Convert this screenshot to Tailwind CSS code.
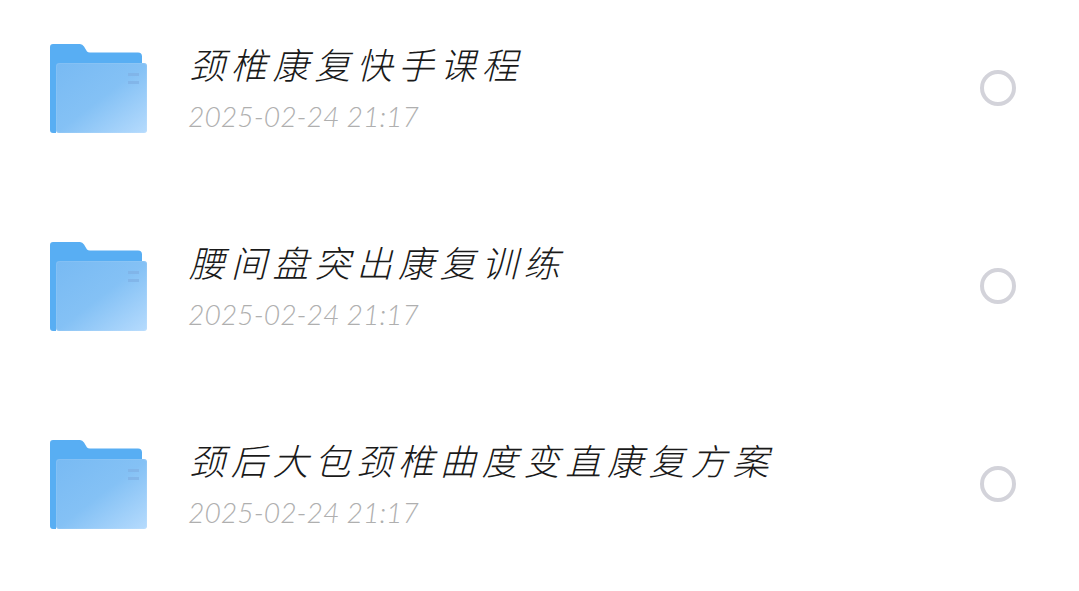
<!DOCTYPE html>
<html lang="zh">
<head>
    <meta charset="UTF-8">
    <title>文件夹</title>
    <script src="https://cdn.jsdelivr.net/npm/@tailwindcss/browser@4"></script>
</head>
<body class="bg-white overflow-hidden">
    <svg width="0" height="0" class="absolute">
        <defs>
            <linearGradient id="front" x1="0" y1="0" x2="1" y2="1">
                <stop offset="0" stop-color="#78baf3"/>
                <stop offset="0.5" stop-color="#84c1f5"/>
                <stop offset="1" stop-color="#b6dbfd"/>
            </linearGradient>
            <symbol id="folder" viewBox="0 0 97 90">
                <path d="M3 0H30Q32.500 0 34 2.500L37 7.500Q38 8.500 40 8.500H88Q92 8.500 92 12.500V30H6V89H3Q0 89 0 86V3Q0 0 3 0Z" fill="#58aef3"/>
                <rect x="6" y="19" width="91" height="70" rx="3" fill="url(#front)"/>
                <rect x="6.500" y="19.500" width="90" height="69" rx="3" fill="none" stroke="#ffffff" stroke-opacity="0.08"/>
                <rect x="78" y="29" width="11" height="3" fill="#7fb2e6" fill-opacity="0.8"/>
                <rect x="78" y="37" width="11" height="3" fill="#7fb2e6" fill-opacity="0.8"/>
            </symbol>
        </defs>
    </svg>

    <div class="flex flex-col gap-[108px] pt-[44px] pl-[50px] pr-[63px]">
        <div class="flex items-center h-[90px]">
            <svg class="w-[97px] h-[90px] shrink-0"><use href="#folder"/></svg>
            <div class="ml-[42px] flex-1 mb-[2px]">
                <div class="font-['Noto_Sans_CJK_SC',sans-serif] text-[36px] leading-[42px] tracking-[5.800px] text-[#1a1a1a] font-light italic">颈椎康复快手课程</div>
                <div class="font-['Lato',sans-serif] text-[28.300px] leading-[36px] mt-[14px] -ml-[1px] text-[#afafaf] font-light italic">2025-02-24 21:17</div>
            </div>
            <div class="w-9 h-9 rounded-full border-[4px] border-[#d3d3da] shrink-0 mb-[2px]"></div>
        </div>
        <div class="flex items-center h-[90px]">
            <svg class="w-[97px] h-[90px] shrink-0"><use href="#folder"/></svg>
            <div class="ml-[42px] flex-1 mb-[2px]">
                <div class="font-['Noto_Sans_CJK_SC',sans-serif] text-[36px] leading-[42px] tracking-[5.800px] text-[#1a1a1a] font-light italic">腰间盘突出康复训练</div>
                <div class="font-['Lato',sans-serif] text-[28.300px] leading-[36px] mt-[14px] -ml-[1px] text-[#afafaf] font-light italic">2025-02-24 21:17</div>
            </div>
            <div class="w-9 h-9 rounded-full border-[4px] border-[#d3d3da] shrink-0 mb-[2px]"></div>
        </div>
        <div class="flex items-center h-[90px]">
            <svg class="w-[97px] h-[90px] shrink-0"><use href="#folder"/></svg>
            <div class="ml-[42px] flex-1 mb-[2px]">
                <div class="font-['Noto_Sans_CJK_SC',sans-serif] text-[36px] leading-[42px] tracking-[5.800px] text-[#1a1a1a] font-light italic">颈后大包颈椎曲度变直康复方案</div>
                <div class="font-['Lato',sans-serif] text-[28.300px] leading-[36px] mt-[14px] -ml-[1px] text-[#afafaf] font-light italic">2025-02-24 21:17</div>
            </div>
            <div class="w-9 h-9 rounded-full border-[4px] border-[#d3d3da] shrink-0 mb-[2px]"></div>
        </div>
    </div>
</body>
</html>
